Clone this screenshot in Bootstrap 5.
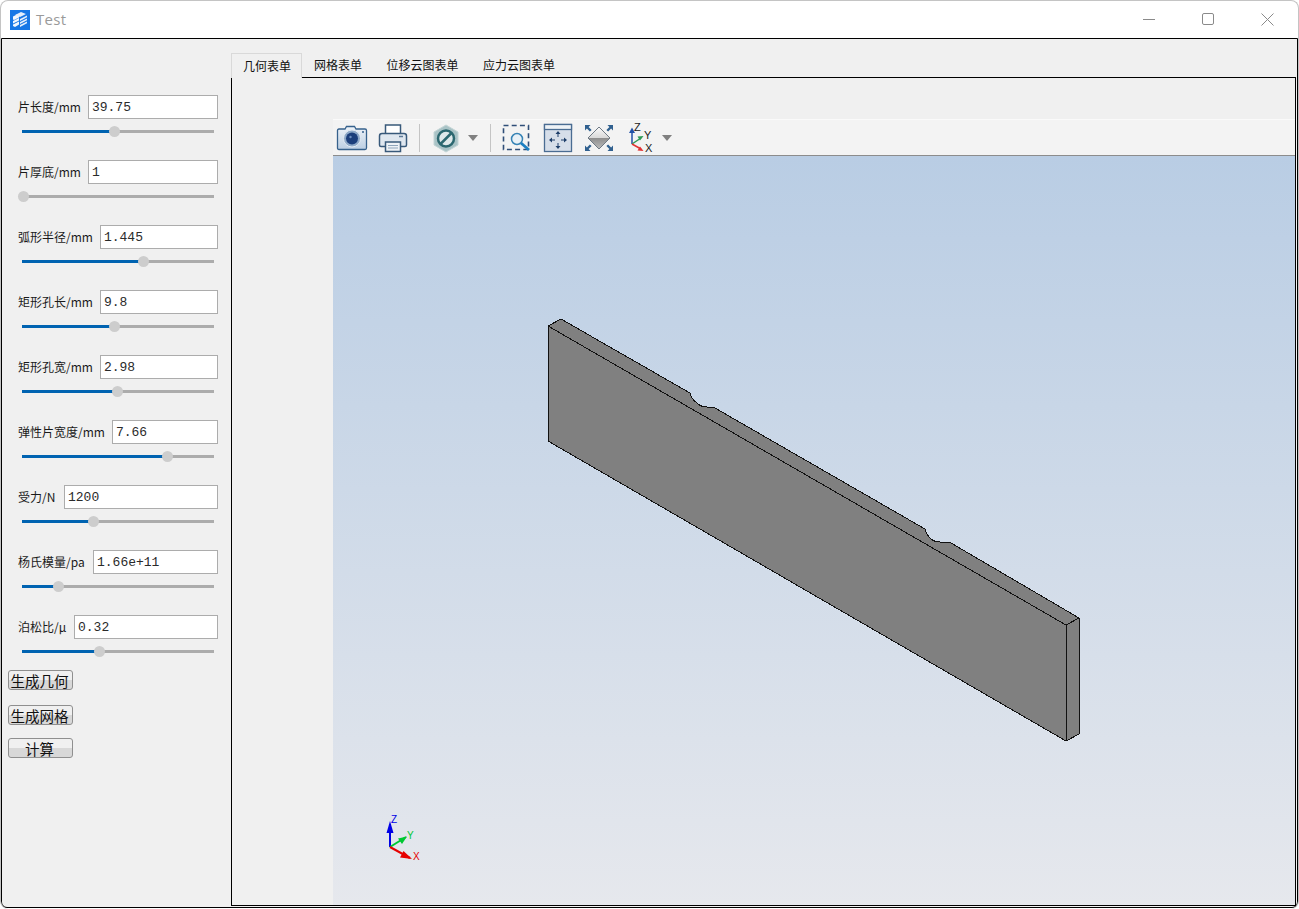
<!DOCTYPE html>
<html lang="zh">
<head>
<meta charset="utf-8">
<title>Test</title>
<link href="https://cdn.jsdelivr.net/npm/bootstrap@5.3.0/dist/css/bootstrap.min.css" rel="stylesheet">
<style>
html,body{height:100%;margin:0;background:#fff;overflow:hidden}
body{font-family:"Noto Sans CJK SC","Liberation Sans",sans-serif;font-size:12px;color:#111}
.appwin{width:1299px;height:909px;border:1px solid #c4c4c4;border-bottom:0;border-radius:8px;background:#fff;overflow:hidden}
.titlebar{height:37px;padding-left:9px}
.titletext{font-family:"Open Sans","Liberation Sans",sans-serif;font-size:15px;color:#9a9a9a;margin-left:6px;letter-spacing:.3px}
.winctl{margin-left:auto;margin-right:24px;gap:46px}
.framebody{height:870px;width:1297px;border:1px solid #000;border-radius:0 0 6px 6px;background:#f0f0f0}
.sidepanel{width:229px;padding:56px 13px 0 6px;flex:none}
.paramrow{margin-bottom:23px;padding-left:10px}
.paramhead{gap:7px;height:24px}
.paramhead label{white-space:nowrap;line-height:1;margin:0;color:#1a1a1a}
.paramhead label.lblforce{width:39px}
.paramhead label.lblmod{width:68px}
.paramhead label.lblpois{width:49px}
.paramhead input{flex:1;min-width:0;height:24px;border:1px solid #acacac;background:#fff;border-radius:0;padding:1px 3px 0;font-family:"Liberation Mono",monospace;font-size:13px;color:#2a2a2a;box-shadow:none}
.sliderbar{display:block;width:196px;height:12px;margin-top:6px;padding:0;background:transparent;-webkit-appearance:none;appearance:none}
.sliderbar::-webkit-slider-runnable-track{height:3px;border-radius:0;background:linear-gradient(to right,transparent 4px,#0063b1 4px,#0063b1 var(--p),#acacac var(--p))}
.sliderbar::-webkit-slider-thumb{-webkit-appearance:none;appearance:none;width:11px;height:11px;margin-top:-4px;border-radius:50%;background:#cdcdcd;border:0}
.actbtn{display:block;width:65px;height:20px;padding:0 2px 0 0;border:1px solid #8f8f8f;border-radius:3px;background:linear-gradient(#f0f0f0 50%,#d8d8d8 50%);font-size:14.5px;line-height:17px;color:#111;font-family:"Noto Sans CJK SC",sans-serif}
.actbtn:hover{background:linear-gradient(#f0f0f0 50%,#d8d8d8 50%);color:#111;border-color:#8f8f8f}
.btnfirst{margin-top:-10px}
.btngap1{margin-top:15px}
.btngap2{margin-top:13px}
.tabarea{flex:1;min-width:0;padding-top:14px;padding-right:1px;padding-bottom:1px}
.tabstrip{height:24px;border-bottom:0;flex-wrap:nowrap;position:relative;z-index:1}
.tabstrip .nav-link{padding:0 12.5px 0 12px;height:25px;line-height:24px;border:0;border-radius:0;font-size:12px;color:#111;background:transparent;margin:0}
.tabstrip .nav-link.active{border:1px solid #d9d9d9;border-bottom:0;background:#f0f0f0;padding:0 10px 0 11px;color:#111}
.tabpane{flex:1;border:1px solid #000;padding:41px 0 0 101px;min-height:0}
.viewbar{height:37px;flex:none;background:#f3f3f3;border-top:1px solid #fafafa;border-bottom:1px solid #8c8c8c}
.viewbar svg{flex:none;display:block}
.tsep{width:1px;height:28px;background:#c4c4c4;flex:none}
.m3{margin-left:3px}.m5{margin-left:5px}.m9{margin-left:9px}.m10{margin-left:10px}.m11{margin-left:11px}.m13{margin-left:13px}.m1{margin-left:1px}
.viewport3d{flex:1;min-height:0;background:linear-gradient(#b9cde4,#e6e8ed)}
.viewport3d svg{display:block}
.axlabel{font-family:"Liberation Sans",sans-serif;font-size:10px}
.tblabel{font-family:"Liberation Sans",sans-serif;font-size:11px;fill:#222}
</style>
</head>
<body>
<div class="appwin d-flex flex-column">
  <div class="titlebar d-flex align-items-center">
    <svg width="20" height="20" viewBox="0 0 20 20"><rect width="20" height="20" fill="#1677e6"/><path d="M3 6.500l5-2.500 1 .5v3L4 10l-1-.5zM3 11l6-3v2.500L3 13.500zM3 14.500l6-3v3L5 17l-2-1z" fill="#f2f7fd"/><path d="M5 5l6-3 5 2-6 3zM10 9l7-3.500v1.800L10 11zM10 12l7-3.500v1.800L10 14zM10 15l7-3.500v1.800L10 17z" fill="#e3eefb"/></svg>
    <span class="titletext">Test</span>
    <div class="winctl d-flex align-items-center">
      <svg width="13" height="13" viewBox="0 0 13 13"><path d="M0 6.500h12" stroke="#8a8a8a" stroke-width="1"/></svg>
      <svg width="13" height="13" viewBox="0 0 13 13"><rect x=".5" y=".5" width="11" height="11" rx="1.500" fill="none" stroke="#8a8a8a"/></svg>
      <svg width="13" height="13" viewBox="0 0 13 13"><path d="M.5.500l12 12M12.500.500l-12 12" stroke="#8a8a8a" stroke-width="1" fill="none"/></svg>
    </div>
  </div>
  <div class="framebody d-flex">
    <div class="sidepanel">
      <div class="paramrow"><div class="paramhead d-flex align-items-center"><label>片长度/mm</label><input class="form-control" value="39.75"></div><input type="range" class="sliderbar" min="0" max="100" value="48.9" style="--p:96px"></div>
      <div class="paramrow"><div class="paramhead d-flex align-items-center"><label>片厚底/mm</label><input class="form-control" value="1"></div><input type="range" class="sliderbar" min="0" max="100" value="0" style="--p:5px"></div>
      <div class="paramrow"><div class="paramhead d-flex align-items-center"><label>弧形半径/mm</label><input class="form-control" value="1.445"></div><input type="range" class="sliderbar" min="0" max="100" value="65.4" style="--p:126px"></div>
      <div class="paramrow"><div class="paramhead d-flex align-items-center"><label>矩形孔长/mm</label><input class="form-control" value="9.8"></div><input type="range" class="sliderbar" min="0" max="100" value="49" style="--p:97px"></div>
      <div class="paramrow"><div class="paramhead d-flex align-items-center"><label>矩形孔宽/mm</label><input class="form-control" value="2.98"></div><input type="range" class="sliderbar" min="0" max="100" value="51.3" style="--p:100px"></div>
      <div class="paramrow"><div class="paramhead d-flex align-items-center"><label>弹性片宽度/mm</label><input class="form-control" value="7.66"></div><input type="range" class="sliderbar" min="0" max="100" value="78" style="--p:149px"></div>
      <div class="paramrow"><div class="paramhead d-flex align-items-center"><label class="lblforce">受力/N</label><input class="form-control" value="1200"></div><input type="range" class="sliderbar" min="0" max="100" value="38.2" style="--p:76px"></div>
      <div class="paramrow"><div class="paramhead d-flex align-items-center"><label class="lblmod">杨氏模量/pa</label><input class="form-control" value="1.66e+11"></div><input type="range" class="sliderbar" min="0" max="100" value="19.3" style="--p:41px"></div>
      <div class="paramrow"><div class="paramhead d-flex align-items-center"><label class="lblpois">泊松比/μ</label><input class="form-control" value="0.32"></div><input type="range" class="sliderbar" min="0" max="100" value="40.5" style="--p:81px"></div>
      <button type="button" class="btn actbtn btnfirst">生成几何</button>
      <button type="button" class="btn actbtn btngap1">生成网格</button>
      <button type="button" class="btn actbtn btngap2">计算</button>
    </div>
    <div class="tabarea d-flex flex-column">
      <ul class="nav nav-tabs tabstrip">
        <li class="nav-item"><a class="nav-link active" href="#">几何表单</a></li>
        <li class="nav-item"><a class="nav-link" href="#">网格表单</a></li>
        <li class="nav-item"><a class="nav-link" href="#">位移云图表单</a></li>
        <li class="nav-item"><a class="nav-link" href="#">应力云图表单</a></li>
      </ul>
      <div class="tabpane d-flex flex-column">
        <div class="viewbar d-flex align-items-center">
          <svg class="m3" width="32" height="32" viewBox="0 0 32 32">
            <defs><linearGradient id="cg" x1="0" y1="0" x2="0" y2="1"><stop offset="0" stop-color="#eef3f8"/><stop offset="1" stop-color="#bccfe3"/></linearGradient></defs>
            <path d="M3 7h6l1.500-2.500h8L20 7h9q1.500 0 1.500 1.500v17.500q0 1.500-1.500 1.500H3q-1.500 0-1.500-1.500V8.500Q1.500 7 3 7z" fill="url(#cg)" stroke="#36618c" stroke-width="1.300"/>
            <circle cx="16" cy="16.500" r="8.500" fill="#8ea9c8" stroke="#e2eaf2" stroke-width="1"/><circle cx="16" cy="16.500" r="6" fill="#1c3f7c"/><circle cx="14.500" cy="15" r="1.200" fill="#6d8fbf"/><circle cx="27" cy="10" r="1" fill="#36618c"/>
          </svg>
          <svg class="m9" width="32" height="32" viewBox="0 0 32 32">
            <path d="M8.500 12V3h15v9" fill="#fff" stroke="#38597a" stroke-width="1.500"/>
            <path d="M5 11.500h22q2.500 0 2.500 2.500v9q0 1.500-1.500 1.500H4q-1.500 0-1.500-1.500v-9q0-2.500 2.500-2.500z" fill="#dfe7ef" stroke="#38597a" stroke-width="1.500"/>
            <rect x="8.500" y="20" width="15" height="9.500" fill="#eef2f6" stroke="#38597a" stroke-width="1.500"/>
            <path d="M11 23.500h10M11 26h10" stroke="#8fa5bb" stroke-width="1"/><path d="M22 14.500h4" stroke="#5d7a97" stroke-width="1.500"/>
          </svg>
          <span class="tsep m10"></span>
          <svg class="m10" width="32" height="32" viewBox="0 0 32 32">
            <path d="M16 3l12 7v13l-12 7-12-7V10z" fill="#a9c3c6" stroke="#c4d5d6" stroke-width="1"/>
            <circle cx="16" cy="16.500" r="8" fill="#dfe9ea" stroke="#2c6870" stroke-width="2.500"/><path d="M10.500 22l11-11" stroke="#2c6870" stroke-width="2.500"/>
          </svg>
          <svg class="m5" width="12" height="8" viewBox="0 0 12 8"><path d="M1 1h10L6 7z" fill="#808080"/></svg>
          <span class="tsep m11"></span>
          <svg class="m9" width="32" height="32" viewBox="0 0 32 32">
            <rect x="3.500" y="3.500" width="25" height="24" fill="none" stroke="#2f4e78" stroke-width="1.600" stroke-dasharray="5 3.200"/>
            <circle cx="17" cy="17" r="5.500" fill="#e9f1f7" stroke="#3683b5" stroke-width="1.500"/><path d="M21 21l8 7" stroke="#1b7fc2" stroke-width="2.800"/>
          </svg>
          <svg class="m10" width="32" height="32" viewBox="0 0 32 32">
            <rect x="2.500" y="2.500" width="27" height="27" fill="#d6dee9" stroke="#4a6c92" stroke-width="1.300"/><rect x="2.500" y="2.500" width="27" height="5" fill="#eef2f6" stroke="#4a6c92" stroke-width="1.300"/>
            <path d="M16 9l2.500 3h-2v3h-1v-3h-2zM16 27l2.500-3h-2v-3h-1v3h-2zM7 18l3-2.500v2h3v1h-3v2zM25 18l-3-2.500v2h-3v1h3v2z" fill="#1f3f6a"/>
          </svg>
          <svg class="m9" width="32" height="32" viewBox="0 0 32 32">
            <defs><linearGradient id="dt" x1="0" y1="0" x2="0" y2="1"><stop offset="0" stop-color="#fafafa"/><stop offset="1" stop-color="#d8d8d8"/></linearGradient><linearGradient id="db" x1="0" y1="0" x2="0" y2="1"><stop offset="0" stop-color="#8c8c8c"/><stop offset="1" stop-color="#bdbdbd"/></linearGradient></defs>
            <path d="M16 5l11 11H5z" fill="url(#dt)"/><path d="M16 27L5 16h22z" fill="url(#db)"/>
            <path d="M16 5l11 11-11 11L5 16z" fill="none" stroke="#6f7a85" stroke-width="1"/>
            <path d="M2 3h5.500l-1.900 1.900 3 3-1.700 1.700-3-3L2 8.500zM30 3h-5.500l1.900 1.900-3 3 1.700 1.700 3-3 1.900 1.900zM2 29h5.500l-1.900-1.900 3-3-1.700-1.700-3 3L2 23.500zM30 29h-5.500l1.900-1.900-3-3 1.700-1.700 3 3 1.900-1.900z" fill="#30608f"/>
          </svg>
          <svg class="m13" width="32" height="32" viewBox="0 0 32 32">
            <path d="M4 22V9" stroke="#2452a8" stroke-width="1.500"/><path d="M4 5.500l3 5.500H1z" fill="#2452a8"/>
            <path d="M4 22l9-6" stroke="#2e9a55" stroke-width="1.500"/><path d="M15.500 14l-6 .5 2.500 4z" fill="#2e9a55"/>
            <path d="M4 22l9 5" stroke="#e23333" stroke-width="1.500"/><path d="M15.500 29l-6-.5 2.500-4z" fill="#e23333"/>
            <text class="tblabel" x="6" y="9">Z</text><text class="tblabel" x="16" y="17">Y</text><text class="tblabel" x="17" y="30">X</text>
          </svg>
          <svg class="m1" width="12" height="8" viewBox="0 0 12 8"><path d="M1 1h10L6 7z" fill="#808080"/></svg>
        </div>
        <div class="viewport3d">
          <svg width="962" height="749" viewBox="333 156 962 749">
            <g stroke="#111" stroke-width="1" stroke-linejoin="round" shape-rendering="crispEdges">
              <path fill="#808080" d="M548 326L561 319L690 393C691 397 694 401 697 403C700 406 704 407 707 407L715 408L925 529C926 533 928 536 930 538C933 541 936 542 940 542L951 543L1079 618L1066 625L548 326Z"/>
              <path fill="#808080" d="M548 326L1066 625V741L548 441Z"/>
              <path fill="#808080" d="M1066 625L1079 618V734L1066 741Z"/>
            </g>
            <g stroke-width="2">
              <path d="M390 847V824" stroke="#0000e6"/><path d="M390 821l3.500 12h-7z" fill="#0000e6"/>
              <path d="M390 847l16-10" stroke="#00c832"/><path d="M407 836.500l-5 7.500-4-5.500z" fill="#00c832"/>
              <path d="M390 847l20 11" stroke="#e60000"/><path d="M412 859l-12-1.500 3.500-6.500z" fill="#e60000"/>
            </g>
            <text class="axlabel" x="391" y="823" fill="#0000e6">Z</text>
            <text class="axlabel" x="407" y="839" fill="#00c832">Y</text>
            <text class="axlabel" x="413" y="860" fill="#e60000">X</text>
          </svg>
        </div>
      </div>
    </div>
  </div>
</div>
</body>
</html>
